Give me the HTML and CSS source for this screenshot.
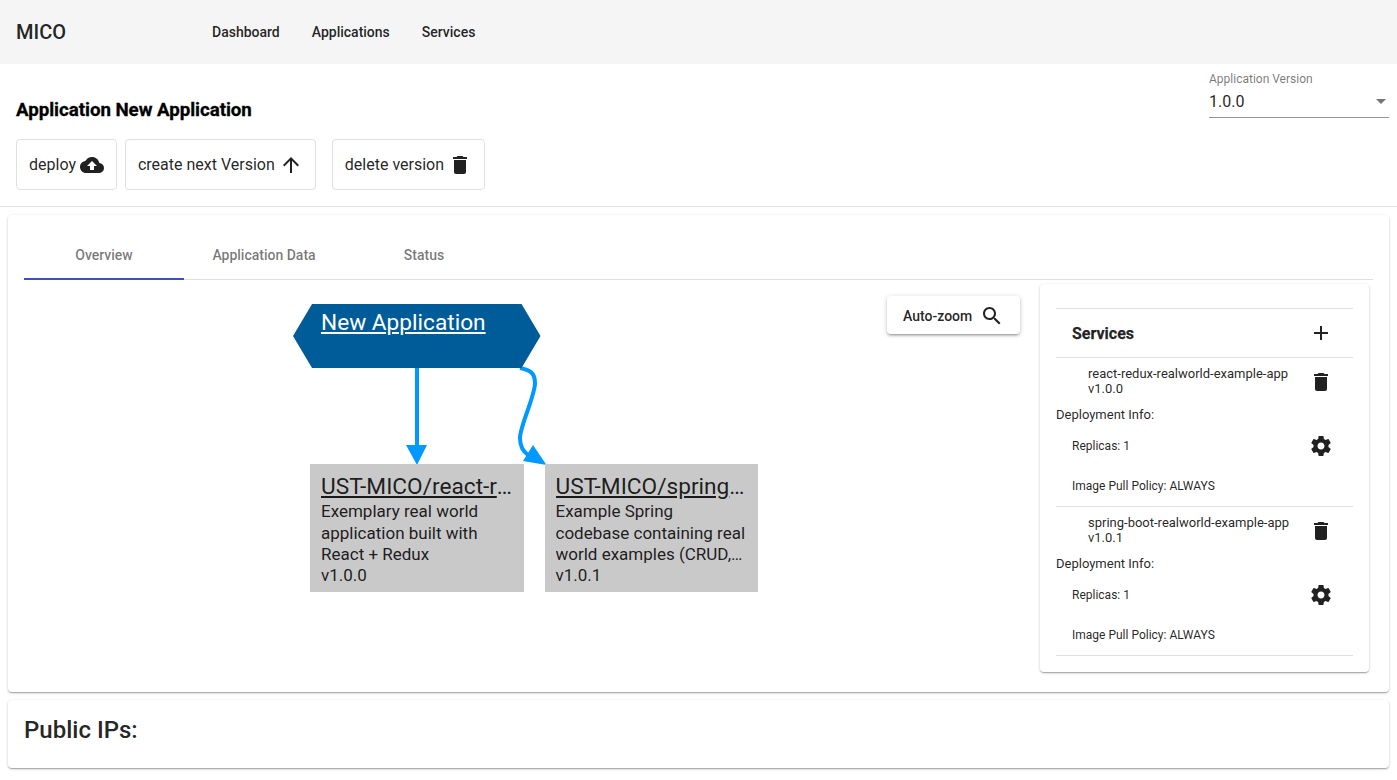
FILE: index.html
```html
<!DOCTYPE html>
<html lang="en">
<head>
<meta charset="utf-8">
<title>MICO</title>
<link rel="stylesheet" href="styles.css">
</head>
<body>
<svg class="defs" width="0" height="0" aria-hidden="true">
  <symbol id="i-cloud" viewBox="0 0 24 24"><path d="M19.35 10.04C18.67 6.59 15.64 4 12 4 9.11 4 6.6 5.64 5.35 8.04 2.34 8.36 0 10.91 0 14c0 3.31 2.69 6 6 6h13c2.76 0 5-2.24 5-5 0-2.64-2.05-4.78-4.65-4.96zM14 13v4h-4v-4H7l5-5 5 5h-3z"/></symbol>
  <symbol id="i-up" viewBox="0 0 24 24"><path d="M4 12l1.41 1.41L11 7.83V20h2V7.83l5.58 5.59L20 12l-8-8-8 8z"/></symbol>
  <symbol id="i-delete" viewBox="0 0 24 24"><path d="M6 19c0 1.1.9 2 2 2h8c1.1 0 2-.9 2-2V7H6v12zM19 4h-3.5l-1-1h-5l-1 1H5v2h14V4z"/></symbol>
  <symbol id="i-search" viewBox="0 0 24 24"><path d="M15.5 14h-.79l-.28-.27C15.41 12.59 16 11.11 16 9.5 16 5.91 13.09 3 9.5 3S3 5.91 3 9.5 5.91 16 9.5 16c1.61 0 3.09-.59 4.23-1.57l.27.28v.79l5 4.99L20.49 19l-4.99-5zm-6 0C7.01 14 5 11.99 5 9.5S7.01 5 9.5 5 14 7.01 14 9.5 11.99 14 9.5 14z"/></symbol>
  <symbol id="i-add" viewBox="0 0 24 24"><path d="M19 13h-6v6h-2v-6H5v-2h6V5h2v6h6v2z"/></symbol>
  <symbol id="i-gear" viewBox="0 0 24 24"><path d="M19.43 12.98c.04-.32.07-.64.07-.98s-.03-.66-.07-.98l2.11-1.65c.19-.15.24-.42.12-.64l-2-3.46c-.12-.22-.39-.3-.61-.22l-2.49 1c-.52-.4-1.08-.73-1.69-.98l-.38-2.65C14.46 2.18 14.25 2 14 2h-4c-.25 0-.46.18-.49.42l-.38 2.65c-.61.25-1.17.59-1.69.98l-2.49-1c-.23-.09-.49 0-.61.22l-2 3.46c-.13.22-.07.49.12.64l2.11 1.65c-.04.32-.07.65-.07.98s.03.66.07.98l-2.11 1.65c-.19.15-.24.42-.12.64l2 3.46c.12.22.39.3.61.22l2.49-1c.52.4 1.08.73 1.69.98l.38 2.65c.03.24.24.42.49.42h4c.25 0 .46-.18.49-.42l.38-2.65c.61-.25 1.17-.59 1.69-.98l2.49 1c.23.09.49 0 .61-.22l2-3.46c.12-.22.07-.49-.12-.64l-2.11-1.65zM12 15.5c-1.93 0-3.5-1.57-3.5-3.5s1.57-3.5 3.5-3.5 3.5 1.57 3.5 3.5-1.57 3.5-3.5 3.5z"/></symbol>
  <symbol id="i-drop" viewBox="0 0 24 24"><path d="M7 10l5 5 5-5z"/></symbol>
</svg>

<header class="topbar">
  <div class="brand">MICO</div>
  <nav class="nav">
    <a class="nav-link">Dashboard</a>
    <a class="nav-link">Applications</a>
    <a class="nav-link">Services</a>
  </nav>
</header>

<section class="page-head">
  <div class="head-left">
    <h1 class="page-title">Application New Application</h1>
    <div class="actions">
      <button class="action">deploy<svg class="icon"><use href="#i-cloud"/></svg></button>
      <button class="action action-gap">create next Version<svg class="icon"><use href="#i-up"/></svg></button>
      <button class="action">delete version<svg class="icon"><use href="#i-delete"/></svg></button>
    </div>
  </div>
  <div class="version">
    <div class="version-label">Application Version</div>
    <div class="version-value"><span>1.0.0</span><svg class="icon icon-drop"><use href="#i-drop"/></svg></div>
  </div>
</section>

<main class="content">
  <section class="card main-card">
    <div class="tabs">
      <div class="tab tab-active">Overview</div>
      <div class="tab">Application Data</div>
      <div class="tab">Status</div>
    </div>
    <div class="overview">
      <div class="canvas">
        <svg class="edges" width="1000" height="400" aria-hidden="true">
          <path class="edge" d="M393 88V166"/>
          <path class="arrow" d="M382 165H403L393 185Z"/>
          <path class="edge" d="M496 88C505 90 511 92 511 103C511 116 496 146 496 158C496 167 499 171 505 176"/>
          <path class="arrow" d="M509 165L522.5 185L499 181Z"/>
        </svg>
        <div class="hex"><a class="hex-title">New Application</a></div>
        <div class="node node-a">
          <a class="node-title">UST-MICO/react-redux-realworld-example-app</a>
          <p class="node-desc">Exemplary real world application built with React + Redux</p>
          <p class="node-ver">v1.0.0</p>
        </div>
        <div class="node node-b">
          <a class="node-title">UST-MICO/spring-boot-realworld-example-app</a>
          <p class="node-desc">Example Spring codebase containing real world examples (CRUD, auth, advanced patterns, etc)</p>
          <p class="node-ver">v1.0.1</p>
        </div>
        <button class="zoom-btn">Auto-zoom<svg class="icon"><use href="#i-search"/></svg></button>
      </div>
      <aside class="panel">
        <div class="panel-head">
          <span class="panel-title">Services</span>
          <svg class="icon"><use href="#i-add"/></svg>
        </div>
        <div class="service">
          <div class="svc-row">
            <div class="svc-name">react-redux-realworld-example-app<br>v1.0.0</div>
            <svg class="icon svc-del"><use href="#i-delete"/></svg>
          </div>
          <div class="svc-info">Deployment Info:</div>
          <div class="svc-line svc-replicas"><span>Replicas: 1</span><svg class="icon"><use href="#i-gear"/></svg></div>
          <div class="svc-line svc-policy">Image Pull Policy: ALWAYS</div>
        </div>
        <div class="service">
          <div class="svc-row">
            <div class="svc-name">spring-boot-realworld-example-app<br>v1.0.1</div>
            <svg class="icon svc-del"><use href="#i-delete"/></svg>
          </div>
          <div class="svc-info">Deployment Info:</div>
          <div class="svc-line svc-replicas"><span>Replicas: 1</span><svg class="icon"><use href="#i-gear"/></svg></div>
          <div class="svc-line svc-policy">Image Pull Policy: ALWAYS</div>
        </div>
      </aside>
    </div>
  </section>
  <section class="card ip-card">
    <h2 class="ip-title">Public IPs:</h2>
  </section>
</main>
</body>
</html>
```
FILE: styles.css
```css
* { box-sizing: border-box; }
html, body { margin: 0; padding: 0; height: 100%; overflow: hidden; }
body { font-family: Roboto, "Liberation Sans", sans-serif; color: rgba(0,0,0,.87); background: #fff; font-size: 14px; }
.defs { position: absolute; }
.icon { width: 24px; height: 24px; fill: currentColor; flex: none; display: block; }

.topbar { height: 64px; background: #f5f5f5; display: flex; align-items: center; padding: 0 16px; }
.brand { width: 180px; font-size: 20px; font-weight: 500; }
.nav { display: flex; }
.nav-link { padding: 0 16px; font-size: 14px; font-weight: 500; line-height: 36px; }

.page-head { display: flex; justify-content: space-between; height: 143px; padding: 0 8px 0 16px; border-bottom: 1px solid #e0e0e0; }
.page-title { margin: 0; padding-top: 36px; font-size: 18.72px; line-height: 21px; font-weight: 700; color: #000; height: 75px; -webkit-text-stroke: .3px #000; letter-spacing: -.04px; }
.actions { display: flex; gap: 8px; }
.action { height: 51px; padding: 0 12px; display: flex; align-items: center; gap: 4px; background: #fff; border: 1px solid #e0e0e0; border-radius: 4px; font: 400 16px Roboto, sans-serif; color: rgba(0,0,0,.87); }
.action-gap { margin-right: 8px; }
.version { width: 180px; padding-top: 8px; }
.version-label { font-size: 12px; line-height: 14px; color: rgba(0,0,0,.54); }
.version-value { height: 31px; display: flex; align-items: center; justify-content: space-between; font-size: 16px; border-bottom: 1px solid rgba(0,0,0,.42); padding-bottom: 2px; margin-top: 1px; }
.icon-drop { color: rgba(0,0,0,.54); margin-right: -4px; }

.content { padding: 8px; display: flex; flex-direction: column; gap: 8px; }
.card { background: #fff; border-radius: 4px; box-shadow: 0 1px 3px 0 rgba(0,0,0,.2), 0 1px 1px 0 rgba(0,0,0,.14), 0 2px 1px -1px rgba(0,0,0,.12); }
.main-card { height: 477px; padding: 16px; }
.tabs { display: flex; height: 49px; border-bottom: 1px solid #e0e0e0; }
.tab { width: 160px; height: 49px; display: flex; align-items: center; justify-content: center; font-size: 14px; font-weight: 500; color: rgba(0,0,0,.54); border-bottom: 2px solid transparent; }
.tab-active { border-bottom-color: #3f51b5; }

.overview { display: flex; }
.canvas { position: relative; flex: 1; height: 390px; }
.edges { position: absolute; left: 0; top: 0; }
.edge { fill: none; stroke: #0099ff; stroke-width: 4; }
.arrow { fill: #0099ff; }
.hex { position: absolute; left: 269px; top: 24px; width: 247.5px; height: 64px; background: #005c99; clip-path: polygon(19px 0, 228.5px 0, 100% 50%, 228.5px 100%, 19px 100%, 0 50%); padding-left: 28px; color: #fff; font-size: 22.67px; line-height: 38px; }
.hex-title { text-decoration: underline; }
.node { position: absolute; top: 184px; width: 213.5px; height: 128px; background: #c9c9c9; padding: 9px 11px 0; font-size: 17px; line-height: 21.25px; }
.node-a { left: 286px; }
.node-b { left: 520.5px; }
.node-title { display: block; font-size: 22.67px; line-height: 27px; text-decoration: underline; white-space: nowrap; overflow: hidden; text-overflow: ellipsis; }
.node-desc { margin: 1.3px 0 0; display: -webkit-box; -webkit-box-orient: vertical; -webkit-line-clamp: 3; overflow: hidden; }
.node-ver { margin: 0; }
.zoom-btn { position: absolute; right: 20px; top: 16px; width: 133px; height: 38px; padding: 2px 16px 0; display: flex; align-items: center; justify-content: space-between; background: #fff; border: 0; border-radius: 4px; font: 500 14px Roboto, sans-serif; color: rgba(0,0,0,.87); box-shadow: 0 1px 5px 0 rgba(0,0,0,.2), 0 2px 2px 0 rgba(0,0,0,.14), 0 3px 1px -2px rgba(0,0,0,.12); }

.panel { width: 329px; height: 388px; margin: 4px 4px 0 0; padding: 24px 16px 16px; background: #fff; border-radius: 4px; box-shadow: 0 1px 3px 0 rgba(0,0,0,.2), 0 1px 1px 0 rgba(0,0,0,.14), 0 2px 1px -1px rgba(0,0,0,.12); }
.panel-head { display: flex; align-items: center; justify-content: space-between; height: 50px; padding: 0 20px 0 16px; border-top: 1px solid #e0e0e0; border-bottom: 1px solid #e0e0e0; }
.panel-title { font-size: 16px; font-weight: 700; -webkit-text-stroke: .25px rgba(0,0,0,.87); }
.service { height: 149px; border-bottom: 1px solid #e0e0e0; }
.svc-row { height: 49px; display: flex; align-items: flex-start; justify-content: space-between; padding: 8px 20px 0 32px; }
.svc-name { font-size: 13px; line-height: 15px; }
.svc-del { margin-top: 4px; }
.svc-info { font-size: 13px; line-height: 15px; }
.svc-line { padding: 0 20px 0 16px; font-size: 12px; display: flex; align-items: center; justify-content: space-between; }
.svc-replicas { height: 48px; }
.svc-policy { height: 32px; }

.ip-card { height: 68px; padding: 16px; }
.ip-title { margin: 0; font-size: 24px; line-height: 28px; font-weight: 500; }
```
